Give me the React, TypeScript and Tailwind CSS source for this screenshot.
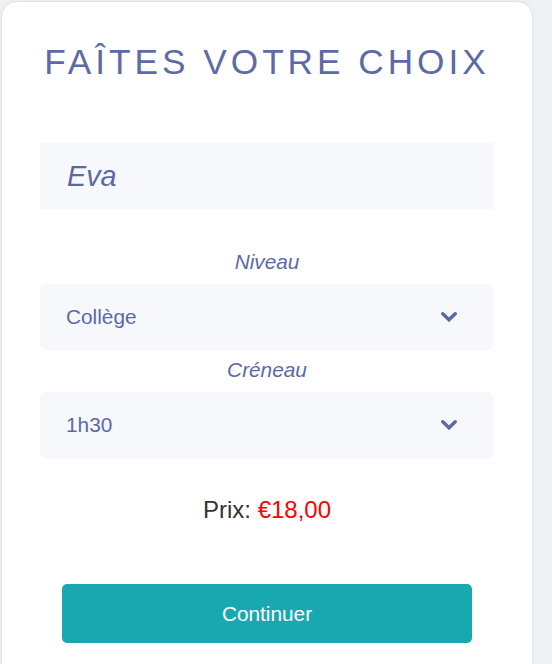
import React from "react";

function Chevron() {
  return (
    <svg width="16" height="10" viewBox="0 0 16 10" className="shrink-0">
      <polyline
        points="1.8,1.8 8,7.8 14.2,1.8"
        fill="none"
        stroke="#5b6aa6"
        strokeWidth="3.4"
        strokeLinecap="round"
        strokeLinejoin="miter"
      />
    </svg>
  );
}

function SelectBox({ value }: { value: string }) {
  return (
    <div className="flex h-[66px] items-center justify-between rounded-md bg-[#f6f8fc] pl-[26px] pr-[37px]">
      <span className="text-[20.8px] leading-[24px] text-[#5b6aa6]">{value}</span>
      <Chevron />
    </div>
  );
}

export default function App() {
  return (
    <div
      className="min-h-screen overflow-hidden bg-[#eff1f4] pt-px pl-px"
      style={{ fontFamily: '"Liberation Sans", Arial, sans-serif' }}
    >
      <div className="w-[532px] rounded-t-[16px] border border-[#e2e5ea] bg-white px-[38px] pt-[40px] pb-[60px] shadow-[0_0_6px_rgba(0,0,0,0.04)]">
        <h1 className="text-center text-[35.2px] leading-[40px] font-normal tracking-[4px] text-[#5c6ba8]">
          FAÎTES VOTRE CHOIX
        </h1>

        <input
          defaultValue="Eva"
          className="mt-[61px] block h-[66px] w-full bg-[#f6f8fc] pl-[27px] text-[28.8px] italic text-[#5b6aa6] outline-none"
          style={{ fontFamily: '"Liberation Sans", Arial, sans-serif' }}
        />

        <div className="mt-[41px] text-center text-[20.8px] leading-[24px] italic text-[#5b6aa6]">
          Niveau
        </div>
        <div className="mt-[10px]">
          <SelectBox value="Collège" />
        </div>

        <div className="mt-[8px] text-center text-[20.8px] leading-[24px] italic text-[#5b6aa6]">
          Créneau
        </div>
        <div className="mt-[10px]">
          <SelectBox value="1h30" />
        </div>

        <div className="mt-[38px] text-center text-[24px] leading-[28px] text-[#333333]">
          Prix: <span className="text-[#ff0000]">€18,00</span>
        </div>

        <div className="mx-[22px] mt-[60px]">
          <button className="flex h-[59px] w-full items-center justify-center rounded-[5px] bg-[#1aa8b0] text-[20.8px] text-white">
            Continuer
          </button>
        </div>
      </div>
    </div>
  );
}
